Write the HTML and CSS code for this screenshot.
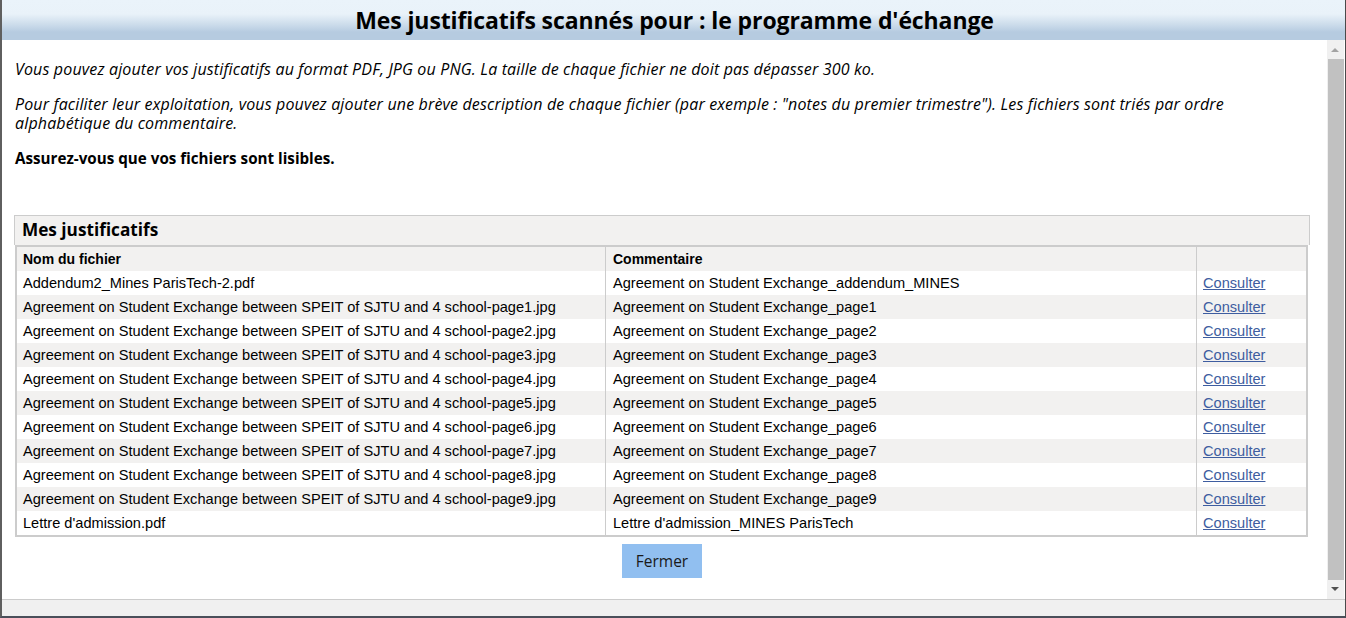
FILE: index.html
```html
<!DOCTYPE html>
<html lang="fr">
<head>
<meta charset="utf-8">
<title>Mes justificatifs</title>
<link rel="stylesheet" href="styles.css">
</head>
<body>
<div class="dialog">
  <div class="titlebar"><h1>Mes justificatifs scannés pour : le programme d'échange</h1></div>
  <div class="main">
    <div class="content">
      <p class="intro">Vous pouvez ajouter vos justificatifs au format PDF, JPG ou PNG. La taille de chaque fichier ne doit pas dépasser 300 ko.</p>
      <p class="intro">Pour faciliter leur exploitation, vous pouvez ajouter une brève description de chaque fichier (par exemple : "notes du premier trimestre"). Les fichiers sont triés par ordre alphabétique du commentaire.</p>
      <p class="warn">Assurez-vous que vos fichiers sont lisibles.</p>

      <div class="panel">
        <div class="panel-head">Mes justificatifs</div>
        <table class="files">
          <thead>
            <tr><th class="c1">Nom du fichier</th><th class="c2">Commentaire</th><th class="c3"></th></tr>
          </thead>
          <tbody>
            <tr><td>Addendum2_Mines ParisTech-2.pdf</td><td>Agreement on Student Exchange_addendum_MINES</td><td><a href="#">Consulter</a></td></tr>
            <tr><td>Agreement on Student Exchange between SPEIT of SJTU and 4 school-page1.jpg</td><td>Agreement on Student Exchange_page1</td><td><a href="#">Consulter</a></td></tr>
            <tr><td>Agreement on Student Exchange between SPEIT of SJTU and 4 school-page2.jpg</td><td>Agreement on Student Exchange_page2</td><td><a href="#">Consulter</a></td></tr>
            <tr><td>Agreement on Student Exchange between SPEIT of SJTU and 4 school-page3.jpg</td><td>Agreement on Student Exchange_page3</td><td><a href="#">Consulter</a></td></tr>
            <tr><td>Agreement on Student Exchange between SPEIT of SJTU and 4 school-page4.jpg</td><td>Agreement on Student Exchange_page4</td><td><a href="#">Consulter</a></td></tr>
            <tr><td>Agreement on Student Exchange between SPEIT of SJTU and 4 school-page5.jpg</td><td>Agreement on Student Exchange_page5</td><td><a href="#">Consulter</a></td></tr>
            <tr><td>Agreement on Student Exchange between SPEIT of SJTU and 4 school-page6.jpg</td><td>Agreement on Student Exchange_page6</td><td><a href="#">Consulter</a></td></tr>
            <tr><td>Agreement on Student Exchange between SPEIT of SJTU and 4 school-page7.jpg</td><td>Agreement on Student Exchange_page7</td><td><a href="#">Consulter</a></td></tr>
            <tr><td>Agreement on Student Exchange between SPEIT of SJTU and 4 school-page8.jpg</td><td>Agreement on Student Exchange_page8</td><td><a href="#">Consulter</a></td></tr>
            <tr><td>Agreement on Student Exchange between SPEIT of SJTU and 4 school-page9.jpg</td><td>Agreement on Student Exchange_page9</td><td><a href="#">Consulter</a></td></tr>
            <tr><td>Lettre d'admission.pdf</td><td>Lettre d'admission_MINES ParisTech</td><td><a href="#">Consulter</a></td></tr>
          </tbody>
        </table>
      </div>

      <div class="actions"><button class="btn-close" type="button">Fermer</button></div>
    </div>
    <div class="scrollbar">
      <div class="arrow-up"></div>
      <div class="thumb"></div>
      <div class="arrow-down"></div>
    </div>
  </div>
  <div class="statusbar"></div>
</div>
</body>
</html>
```

FILE: styles.css
```css
* { box-sizing: border-box; }
html, body { margin: 0; padding: 0; background: #fff; }
body { width: 1346px; height: 618px; overflow: hidden; }

.dialog {
  width: 1346px;
  height: 618px;
  display: flex;
  flex-direction: column;
  border-left: 2px solid #5f5f5f;
  border-right: 1px solid #4a4a4a;
  border-bottom: 2px solid #4a4f5a;
  font-family: "Open Sans", "Noto Sans", sans-serif;
  color: #000;
}

.titlebar {
  height: 40px;
  flex: none;
  display: flex;
  align-items: center;
  justify-content: center;
  background: linear-gradient(to bottom, #eaf3fa 0px, #e9f2f9 14px, #c8d9e9 26px, #b6cbe0 32px, #b6cbe0 40px);
}
.titlebar h1 {
  margin: 0;
  font-size: 23px;
  font-weight: 700;
  line-height: 28px;
  letter-spacing: -0.1px;
  padding-left: 2px;
}

.main {
  flex: 1;
  display: flex;
  min-height: 0;
}

.content {
  flex: 1;
  padding: 20px 17px 0 12px;
  overflow: hidden;
}

.intro {
  margin: 0 0 16px;
  padding-left: 1px;
  font-size: 16px;
  line-height: 19px;
  font-style: italic;
  letter-spacing: 0.15px;
}
.warn {
  margin: 0;
  padding-left: 1px;
  font-size: 15.2px;
  line-height: 19px;
  font-weight: 700;
}

.panel {
  margin-top: 47px;
}
.panel-head {
  height: 30px;
  background: #f2f1f0;
  border: 1px solid #cccccc;
  border-bottom: none;
  padding: 1px 0 0 7px;
  font-size: 17.2px;
  font-weight: 700;
  line-height: 26px;
}

.files {
  width: calc(100% - 3px);
  margin-left: 1px;
  border-collapse: separate;
  border-spacing: 0;
  border: 2px solid #cccccc;
  font-family: "Liberation Sans", Arial, sans-serif;
  font-size: 14.6px;
  table-layout: fixed;
}
.files th, .files td {
  height: 24px;
  padding: 0 6px;
  text-align: left;
  vertical-align: middle;
  white-space: nowrap;
}
.files th {
  background: #f2f1f0;
  font-weight: 700;
  font-size: 14px;
}
.files td + td, .files th + th { border-left: 1px solid #cccccc; }
.files tbody tr:nth-child(odd) td { background: #ffffff; }
.files tbody tr:nth-child(even) td { background: #f2f1f0; }
.files .c1 { width: 588px; }
.files .c2 { width: 591px; }
.files td:nth-child(2), .files th:nth-child(2) { padding-left: 7px; }
.files a { color: #3e5da0; text-decoration: underline; }

.actions {
  display: flex;
  justify-content: center;
  padding: 7px 0 0 0;
}
.btn-close {
  width: 80px;
  height: 34px;
  border: none;
  background: #91bff0;
  font-family: "Open Sans", "Noto Sans", sans-serif;
  font-size: 15.5px;
  color: #1a1a1a;
  padding: 0;
}

.scrollbar {
  width: 17px;
  flex: none;
  margin-right: 1px;
  background: #f0f0f0;
  display: flex;
  flex-direction: column;
  align-items: center;
}
.arrow-up, .arrow-down {
  height: 19px;
  width: 17px;
  position: relative;
}
.arrow-up::after, .arrow-down::after {
  content: "";
  position: absolute;
  left: 4px;
  width: 0; height: 0;
  border-left: 4px solid transparent;
  border-right: 4px solid transparent;
}
.arrow-up::after { top: 8px; border-bottom: 4px solid #a3a3a3; }
.arrow-down::after { top: 7px; border-top: 4px solid #505050; }
.thumb {
  flex: 1;
  width: 16px;
  margin-left: 1px;
  background: #c1c1c1;
}

.statusbar {
  height: 17px;
  flex: none;
  background: #f0f0f0;
  border-top: 1px solid #cccccc;
}
```
